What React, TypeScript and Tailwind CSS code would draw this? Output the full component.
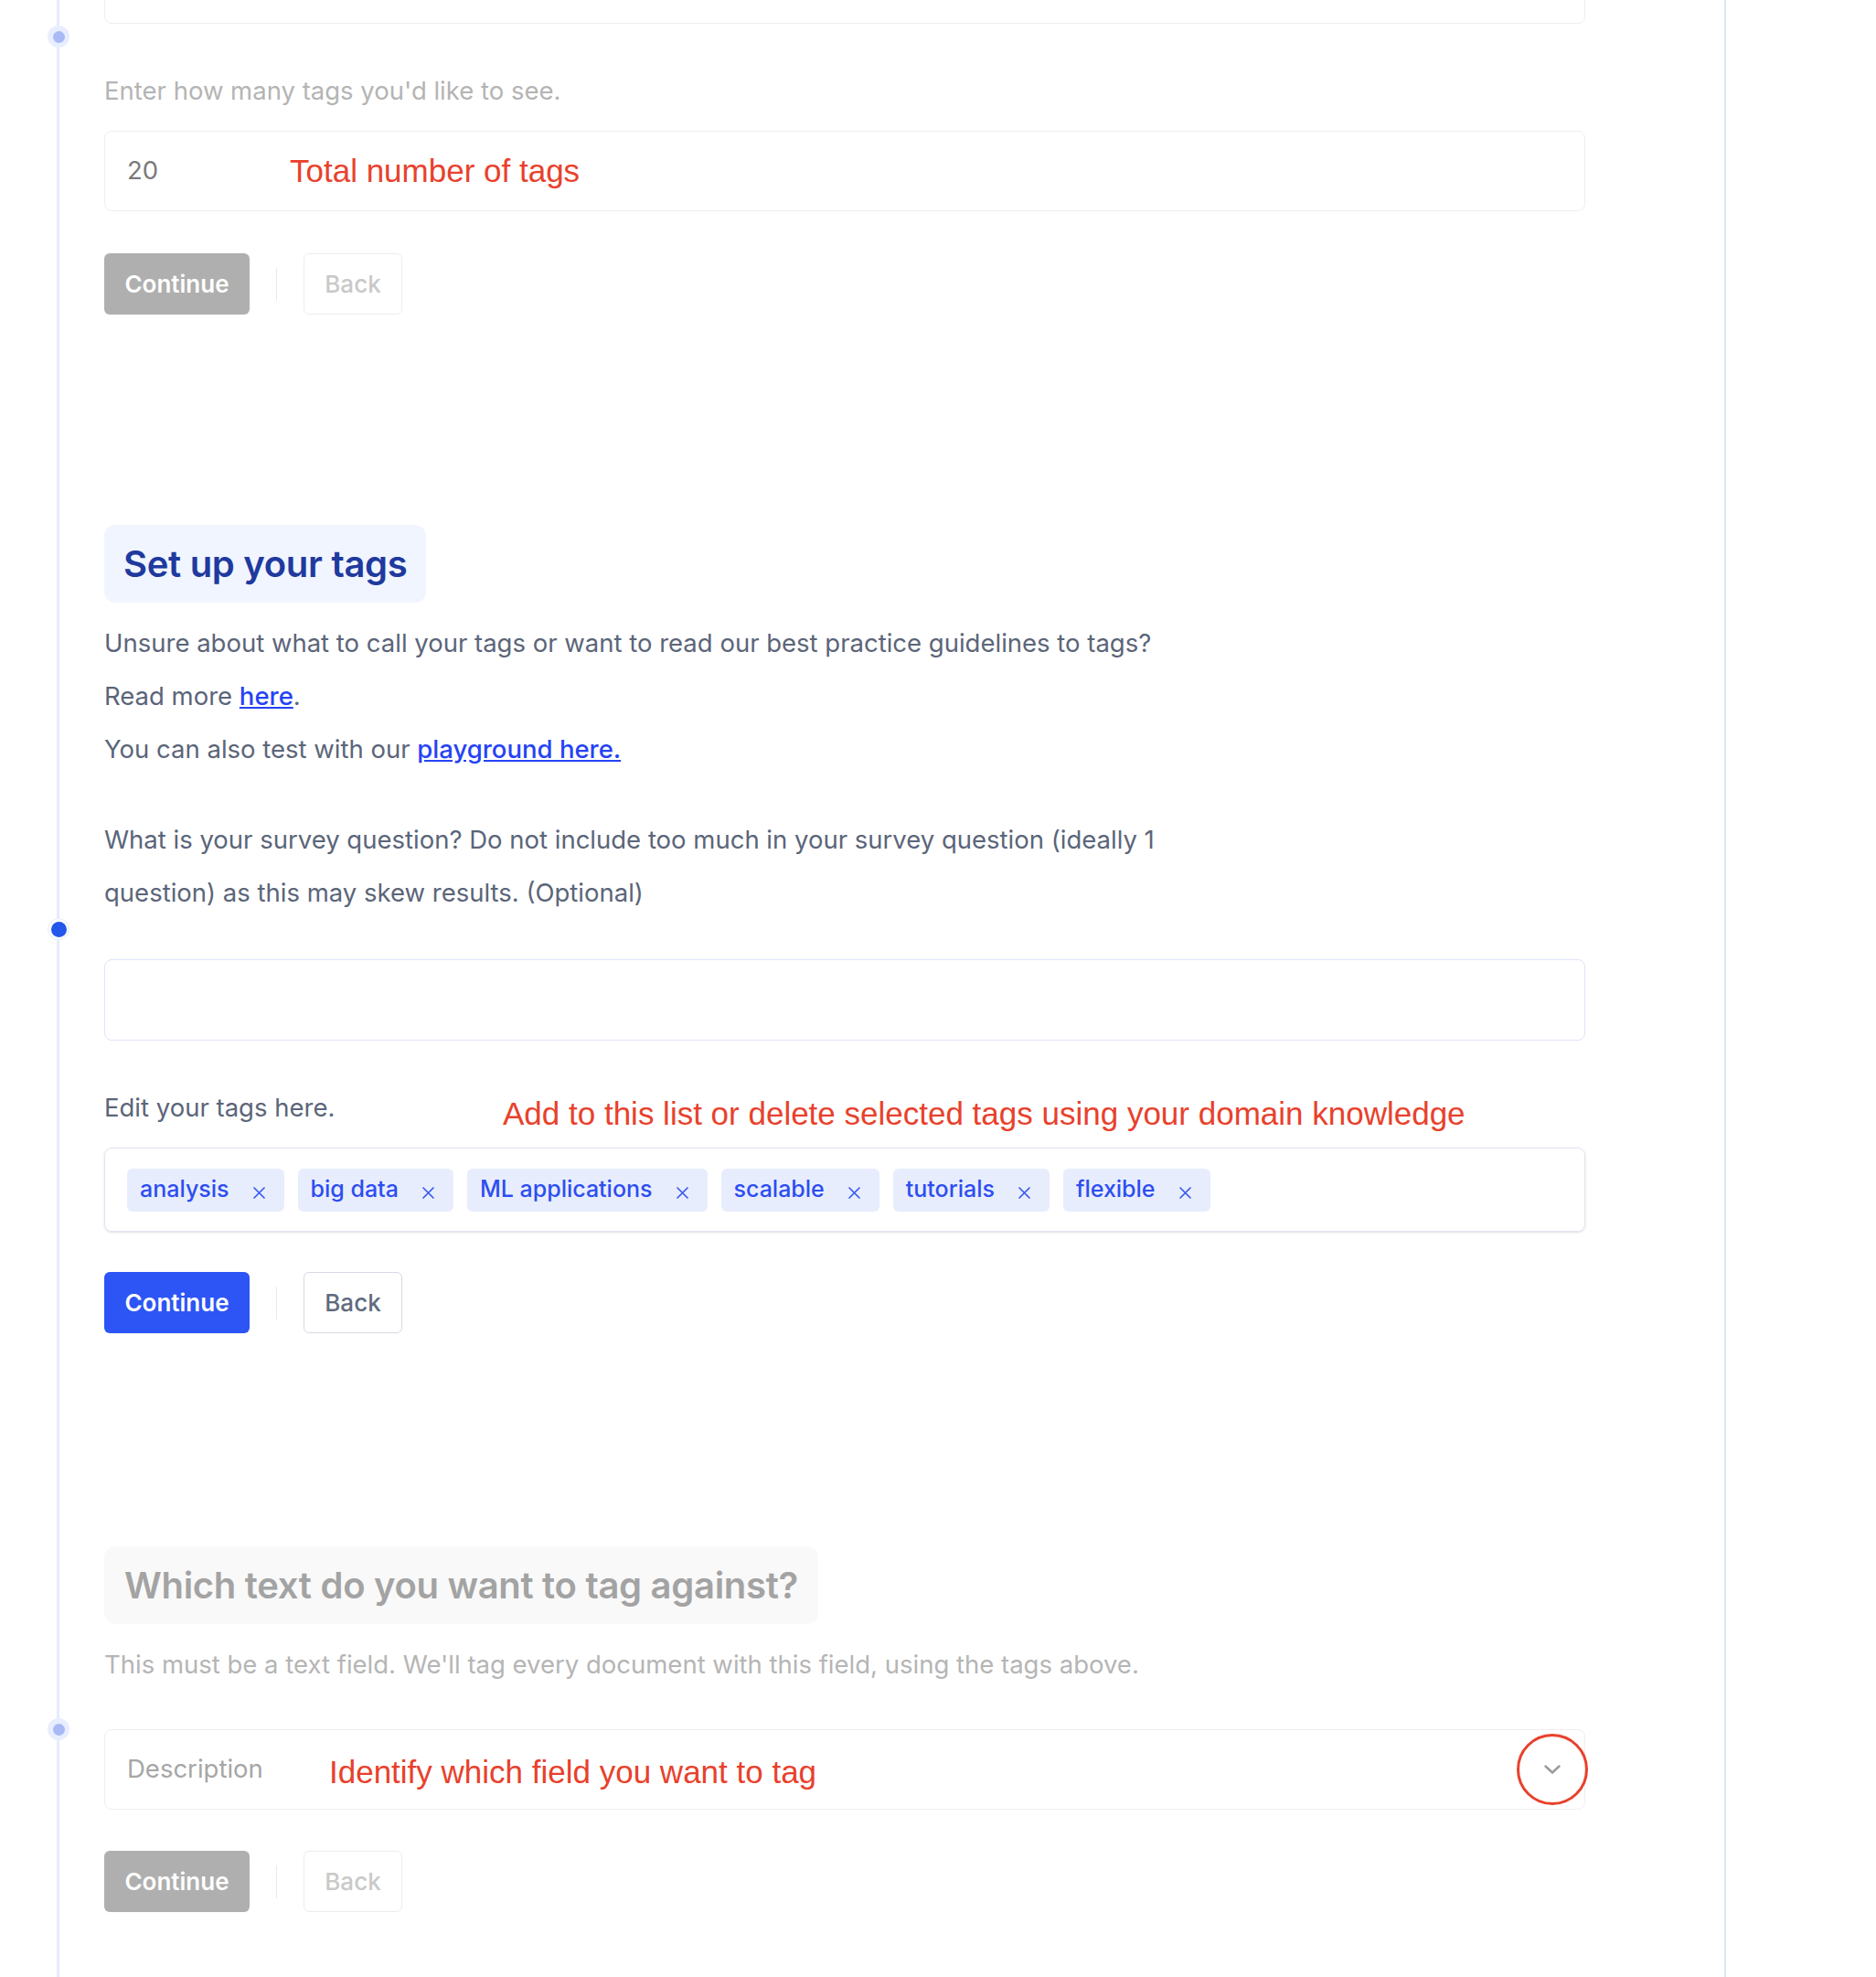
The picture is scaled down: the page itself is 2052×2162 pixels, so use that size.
import React from 'react';

const red = "font-['Liberation_Sans',Arial,sans-serif] text-[35px] leading-[40px] text-[#e8412c]";

const tags = ['analysis', 'big data', 'ML applications', 'scalable', 'tutorials', 'flexible'];

function Dot({active}: {active?: boolean}) {
    if (active) {
        return (
            <div className="absolute left-[-62px] top-1/2 flex h-[24px] w-[24px] -translate-y-1/2 items-center justify-center rounded-full border border-[#e6ebfe] bg-white">
                <div className="h-[17px] w-[17px] rounded-full bg-[#2556ea]"/>
            </div>
        );
    }
    return (
        <div className="absolute left-[-62px] top-1/2 flex h-[24px] w-[24px] -translate-y-1/2 items-center justify-center rounded-full bg-[#e8edff]">
            <div className="h-[13px] w-[13px] rounded-full bg-[#a9b9f6]"/>
        </div>
    );
}

function Buttons({active}: {active?: boolean}) {
    return (
        <div className="flex items-center gap-[29px]">
            <button
                className={`h-[67px] w-[159px] rounded-md text-[26px] font-semibold text-white ${active ? 'bg-[#2d55f5]' : 'bg-[#afafaf]'}`}>
                Continue
            </button>
            <div className="h-[36px] w-px bg-[#e8e9ee]"/>
            <button
                className={`h-[67px] w-[108px] rounded-md border bg-white text-[26px] font-medium ${active ? 'border-[#d6dae3] text-[#5f6b7e]' : 'border-[#ececec] text-[#c9c9c9]'}`}>
                Back
            </button>
        </div>
    );
}

function Cross() {
    return (
        <svg width="15" height="15" viewBox="0 0 15 15" className="mt-[6px]">
            <path d="M2 2 L13 13 M13 2 L2 13" stroke="#3a5af0" strokeWidth="1.7" strokeLinecap="round"/>
        </svg>
    );
}

export default function App() {
    return (
        <div className="min-h-screen w-[1888px] overflow-hidden border-r-2 border-[#e1e7ef] bg-white pl-[62px] font-['Inter',sans-serif]">
            <div className="min-h-screen border-l-[3px] border-[#e6ebfe] pb-[80px] pl-[49px]">

                {/* step: number of tags */}
                <section className="relative -mt-[264px] pt-[202px]">
                    <Dot/>
                    <div className="h-[88px] w-[1620px] rounded-lg border border-[#efefef]"/>
                    <p className="mb-[15px] mt-[44px] text-[27.5px] leading-[58px] text-[#b4b4b4]">
                        Enter how many tags you'd like to see.
                    </p>
                    <div className="flex h-[88px] w-[1620px] items-center rounded-lg border border-[#efefef] px-6">
                        <span className="w-[178px] text-[27.5px] text-[#7a7a7a]">20</span>
                        <span className={red}>Total number of tags</span>
                    </div>
                    <div className="mt-[46px]">
                        <Buttons/>
                    </div>
                </section>

                {/* step: set up tags */}
                <section className="relative mt-[230px]">
                    <Dot active/>
                    <div className="inline-flex h-[85px] items-center rounded-xl bg-[#f0f5ff] px-[21px]">
                        <h2 className="text-[40px] font-semibold tracking-[-0.3px] text-[#1f3a9e]">Set up your tags</h2>
                    </div>
                    <div className="mt-[15px] text-[27.5px] leading-[58px] text-[#5b6579]">
                        <p className="whitespace-nowrap">Unsure about what to call your tags or want to read our best practice guidelines to tags?</p>
                        <p>Read more <a href="#" className="font-medium text-[#2543f5] underline">here</a>.</p>
                        <p>You can also test with our <a href="#" className="font-medium text-[#2543f5] underline">playground here.</a></p>
                        <p className="mt-[41px] w-[1200px]">
                            What is your survey question? Do not include too much in your survey question (ideally 1
                            question) as this may skew results. (Optional)
                        </p>
                    </div>
                    <div className="mt-[44px] h-[89px] w-[1620px] rounded-lg border border-[#dfe4fb]"/>
                    <div className="mb-[15px] mt-[44px] flex items-center">
                        <span className="w-[436px] text-[27.5px] leading-[58px] text-[#5b6579]">Edit your tags here.</span>
                        <span className={`${red} mt-[14px]`}>Add to this list or delete selected tags using your domain knowledge</span>
                    </div>
                    <div className="flex h-[92px] w-[1620px] items-center gap-[15px] rounded-lg border border-[#e1e4f2] px-6 shadow-sm">
                        {tags.map(t => (
                            <div key={t} className="flex h-[47px] items-center gap-[25px] rounded-md bg-[#e8edfd] pl-[14px] pr-[20px]">
                                <span className="text-[25px] font-medium text-[#2d4ef0]">{t}</span>
                                <Cross/>
                            </div>
                        ))}
                    </div>
                    <div className="mt-[44px]">
                        <Buttons active/>
                    </div>
                </section>

                {/* step: field to tag */}
                <section className="relative mt-[233px]">
                    <Dot/>
                    <div className="inline-flex h-[85px] items-center rounded-xl bg-[#f9f9f9] px-[22px]">
                        <h2 className="text-[40px] font-semibold tracking-[-0.3px] text-[#a3a3a3]">Which text do you want to tag against?</h2>
                    </div>
                    <p className="mt-[15px] text-[27.5px] leading-[58px] text-[#b5b5b5]">
                        This must be a text field. We'll tag every document with this field, using the tags above.
                    </p>
                    <div className="mt-[42px] flex h-[88px] w-[1620px] items-center rounded-lg border border-[#efefef] px-6">
                        <span className="w-[221px] text-[27.5px] text-[#a6a6a6]">Description</span>
                        <span className={`${red} mt-[6px]`}>Identify which field you want to tag</span>
                        <div className="-mr-[28px] ml-auto flex h-[78px] w-[78px] items-center justify-center rounded-full border-[3px] border-[#e8412c]">
                            <svg width="18" height="10" viewBox="0 0 18 10">
                                <path d="M1.5 1.5 L9 8.5 L16.5 1.5" fill="none" stroke="#9a9a9a" strokeWidth="2.4" strokeLinecap="round" strokeLinejoin="round"/>
                            </svg>
                        </div>
                    </div>
                    <div className="mt-[45px]">
                        <Buttons/>
                    </div>
                </section>
            </div>
        </div>
    );
}
